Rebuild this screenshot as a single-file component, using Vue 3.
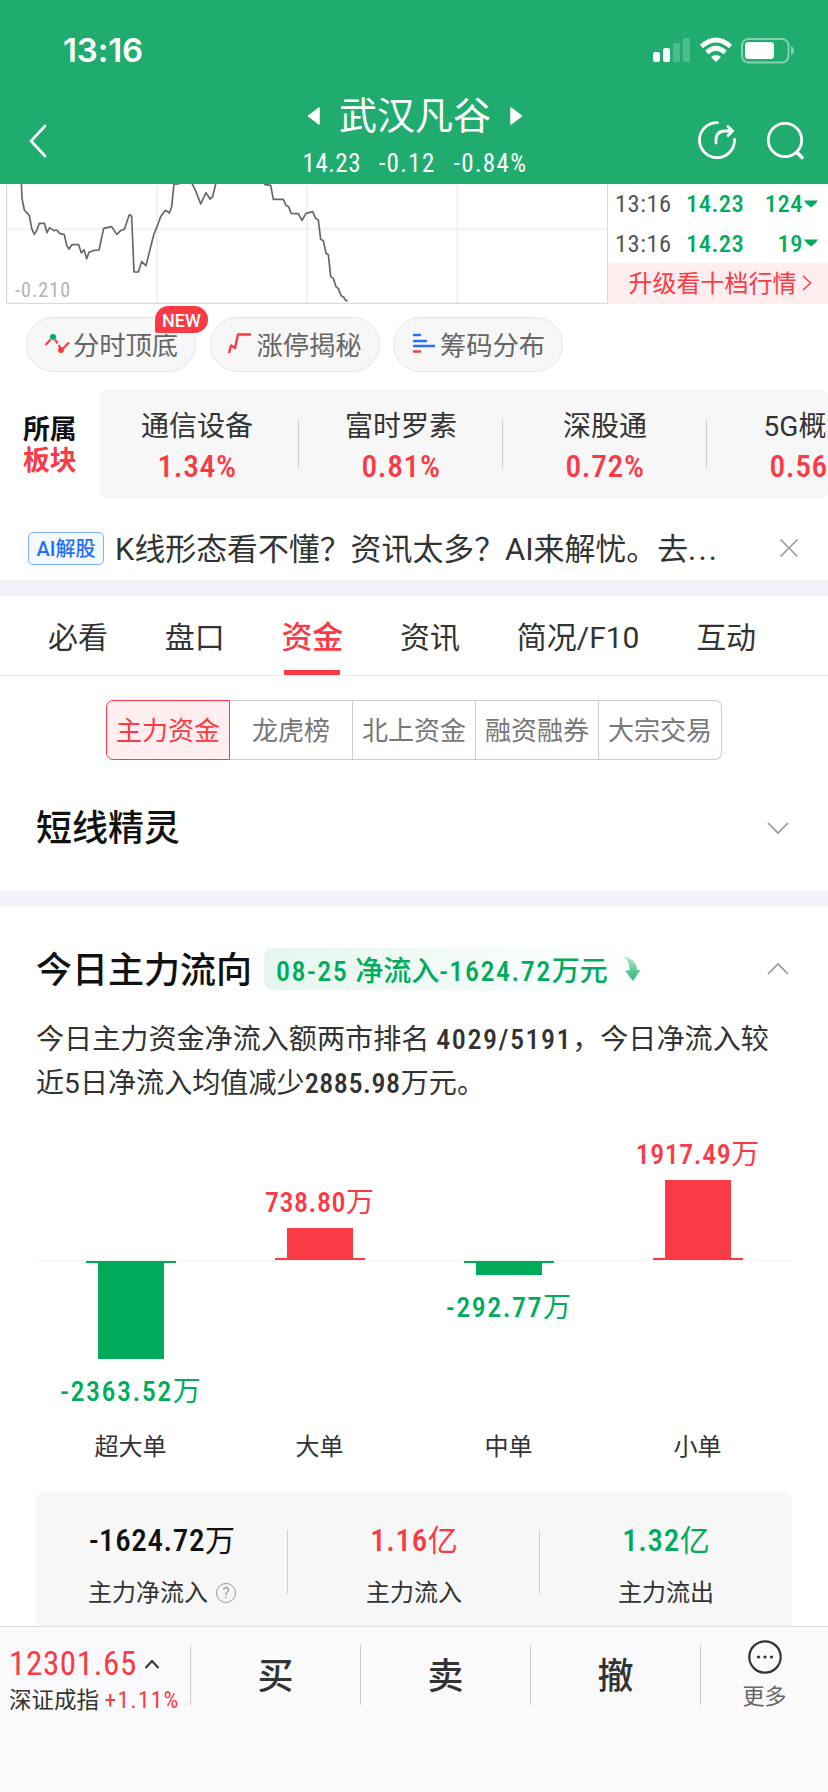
<template>
  <div class="page">
    <header class="header">
      <div class="status">
        <span class="clock">13:16</span>
        <svg class="status-icons" width="144" height="28" viewBox="0 0 144 28">
          <g fill="#fff">
            <rect x="1" y="16" width="7" height="10" rx="2" />
            <rect x="11" y="12" width="7" height="14" rx="2" />
            <rect x="21" y="7" width="7" height="19" rx="2" opacity=".2" />
            <rect x="31" y="2" width="7" height="24" rx="2" opacity=".2" />
            <path d="M64 26l-5-5q5-4 10 0z" />
            <rect x="93" y="6" width="29" height="17" rx="3.5" />
            <path d="M139 10q3 1.200 3 4.500t-3 4.500z" opacity=".45" />
          </g>
          <g fill="none" stroke="#fff" stroke-width="4.600">
            <path d="M49.500 10.500Q64-2.500 78.500 10.500" />
            <path d="M54.800 16.500Q64 8 73.200 16.500" />
          </g>
          <rect x="90" y="3" width="46.500" height="23.500" rx="6.500" fill="none" stroke="#fff" stroke-width="2" opacity=".45" />
        </svg>
      </div>
      <div class="nav">
        <svg class="back" width="20" height="36" viewBox="0 0 20 36">
          <path d="M17 3L3 18l14 15" fill="none" stroke="#fff" stroke-width="2.600" stroke-linecap="round" />
        </svg>
        <div class="stock">
          <div class="stock-name">
            <svg width="14" height="20" viewBox="0 0 14 20"><path d="M1.500 10L12 2v16z" fill="#fff" stroke="#fff" stroke-width="1.500" stroke-linejoin="round" /></svg>
            <span>武汉凡谷</span>
            <svg width="14" height="20" viewBox="0 0 14 20"><path d="M12.500 10L2 2v16z" fill="#fff" stroke="#fff" stroke-width="1.500" stroke-linejoin="round" /></svg>
          </div>
          <div class="stock-price">
            <span class="num">14.23</span><span class="num wide">-0.12</span><span class="num wide">-0.84%</span>
          </div>
        </div>
        <svg class="nav-icons" width="108" height="44" viewBox="0 0 108 44">
          <g fill="none" stroke="#fff" stroke-width="2.800" stroke-linecap="round">
            <path d="M20.500 4.600A17.500 17.500 0 1 0 37.500 21.500" />
            <path d="M19 25v-3q0-9 9-9h6" />
            <path d="M31 8.500l4.500 4.500-4.500 4.500" />
            <circle cx="88" cy="22" r="16.700" />
            <path d="M100 34.500l5 5" stroke-width="3.600" />
          </g>
        </svg>
      </div>
    </header>

    <section class="quote">
      <div class="minute">
        <svg width="608" height="120" viewBox="0 12 1824 360">
          <g stroke="#efefef" stroke-width="5">
            <path d="M20 147H1822M471 12V370M921 12V370M1372 12V370" />
          </g>
          <path d="M20 12V370H1823V12" fill="none" stroke="#d2d3d5" stroke-width="3" />
          <g fill="none" stroke="#666" stroke-width="5" stroke-linejoin="round">
            <path d="M64 8L66 55 73 90 80 98 88 106 95 145 103 163 110 152 118 130H133L141 158 149 143 162 152 170 150 180 161 193 164 200 196 207 207 216 194H236L244 219 252 209 260 236 267 217 283 211 297 210 311 145 335 140 350 163 362 152 373 148 388 104 395 108 402 276H415L425 245 438 257 461 165 471 140 482 110 495 92 502 94 508 99 515 80 522 12H538" />
            <path d="M575 8L588 35 602 72 618 38 630 57 638 50 648 8" />
            <path d="M792 13L812 16 820 58H850L858 76 866 80 873 100 895 101 906 121 918 100 938 95 947 115 955 120 962 178 970 182 978 220 985 224 992 290 1000 295 1008 320 1015 326 1023 347 1030 350 1038 362H1043" />
          </g>
        </svg>
        <span class="minute-low num wide">-0.210</span>
      </div>
      <div class="ticks">
        <div v-for="t in ticks" :key="t.vol" class="tick num">
          <span class="tick-time">{{ t.time }}</span>
          <span class="tick-price">{{ t.price }}</span>
          <span class="tick-vol">{{ t.vol }}</span>
          <svg width="16" height="10" viewBox="0 0 16 10"><path d="M1 1.500h14q-2 3.500-7 7-5-3.500-7-7z" fill="#00ac5c" /></svg>
        </div>
        <div class="upgrade">
          <span>升级看十档行情</span>
          <svg width="12" height="18" viewBox="0 0 12 18"><path d="M2 2l7.500 7L2 16" fill="none" stroke="#fa3a44" stroke-width="1.500" /></svg>
        </div>
      </div>
    </section>

    <section class="tools">
      <div class="tool">
        <svg width="26" height="26" viewBox="0 0 26 26">
          <path d="M1.500 14l5-5.500M11 8.500l2.500 4M14.500 14l2 3M19 17.500l6-6" fill="none" stroke="#fa3a44" stroke-width="2.200" />
          <circle cx="9" cy="6" r="3" fill="#00ac5c" />
          <circle cx="17" cy="19" r="3" fill="#fa3a44" />
        </svg>
        <span>分时顶底</span>
        <em class="badge">NEW</em>
      </div>
      <div class="tool">
        <svg width="26" height="26" viewBox="0 0 26 26">
          <path d="M2 22l2-7.500 4 2.500 3-13.500h13" fill="none" stroke="#fa3a44" stroke-width="2.400" stroke-linejoin="round" />
        </svg>
        <span>涨停揭秘</span>
      </div>
      <div class="tool">
        <svg width="26" height="26" viewBox="0 0 26 26" stroke-width="2.400" stroke-linecap="round">
          <path d="M3 4h6M3 10h12M3 15h20" stroke="#2b6fff" />
          <path d="M3 20.500h6" stroke="#fa3a44" />
        </svg>
        <span>筹码分布</span>
      </div>
    </section>

    <section class="sector">
      <div class="sector-label">
        <span>所属</span>
        <span class="red">板块</span>
      </div>
      <div class="sector-list">
        <div v-for="s in sectors" :key="s.name" class="sector-item">
          <span class="sector-name">{{ s.name }}</span>
          <span class="sector-rate num">{{ s.rate }}</span>
        </div>
      </div>
    </section>

    <section class="ai">
      <span class="ai-tag">AI解股</span>
      <span class="ai-text">K线形态看不懂？资讯太多？AI来解忧。去<span class="dots">...</span></span>
      <svg width="22" height="22" viewBox="0 0 22 22"><path d="M2.500 2.500l17 17M19.500 2.500l-17 17" stroke="#999" stroke-width="1.600" /></svg>
    </section>

    <nav class="tabs">
      <span v-for="t in tabs" :key="t" class="tab" :class="{ active: t === tab }" @click="tab = t">{{ t }}</span>
    </nav>

    <div class="segments">
      <span v-for="s in segments" :key="s" class="segment" :class="{ active: s === segment }" @click="segment = s">{{ s }}</span>
    </div>

    <section class="fold">
      <h2>短线精灵</h2>
      <svg width="24" height="14" viewBox="0 0 24 14"><path d="M2 2l10 10L22 2" fill="none" stroke="#999" stroke-width="1.700" /></svg>
    </section>

    <section class="flow">
      <div class="flow-head">
        <h2>今日主力流向</h2>
        <span class="flow-tag">
          <span><span class="num wide">08-25</span> 净流入<span class="num wide">-1624.72</span>万元</span>
          <svg width="20" height="28" viewBox="0 0 20 28">
            <defs>
              <linearGradient id="drop" x1="0" y1="0" x2="0" y2="1">
                <stop offset="0" stop-color="#c4ead7" />
                <stop offset=".6" stop-color="#5cc893" />
                <stop offset="1" stop-color="#35b979" />
              </linearGradient>
            </defs>
            <path d="M1 1Q15 4 15 15h3.500L11 26 3 15.500h4.500Q8 7 1 1z" fill="url(#drop)" />
          </svg>
        </span>
        <svg class="flow-fold" width="24" height="14" viewBox="0 0 24 14"><path d="M2 12L12 2l10 10" fill="none" stroke="#999" stroke-width="1.700" /></svg>
      </div>
      <p class="flow-desc">
        今日主力资金净流入额两市排名 <b class="num wide">4029/5191</b>，今日净流入较<br>近5日净流入均值减少<b class="num">2885.98</b>万元。
      </p>

      <div class="bars">
        <div v-for="b in bars" :key="b.name" class="bar-col" :class="b.up ? 'up' : 'down'">
          <div class="bar-top">
            <template v-if="b.up">
              <span class="bar-value"><span class="num">{{ b.value }}</span>万</span>
              <i class="bar" :style="{ height: b.size + 'px' }"></i>
              <i class="bar-base"></i>
            </template>
          </div>
          <div class="bar-bottom">
            <template v-if="!b.up">
              <i class="bar-base"></i>
              <i class="bar" :style="{ height: b.size + 'px' }"></i>
              <span class="bar-value"><span class="num wide">{{ b.value }}</span>万</span>
            </template>
          </div>
          <span class="bar-name">{{ b.name }}</span>
        </div>
      </div>

      <div class="stats">
        <div v-for="s in stats" :key="s.label" class="stat">
          <span class="stat-value" :class="s.tone"><span class="num">{{ s.value }}</span>{{ s.unit }}</span>
          <span class="stat-label">
            {{ s.label }}
            <i v-if="s.help" class="help">?</i>
          </span>
        </div>
      </div>
    </section>

    <footer class="footer">
      <div class="index">
        <div class="index-value">
          <span class="num">12301.65</span>
          <svg width="16" height="12" viewBox="0 0 16 12"><path d="M1.500 10L8 3l6.500 7" fill="none" stroke="#333" stroke-width="2" /></svg>
        </div>
        <div class="index-name">深证成指 <span class="index-rate num wide">+1.11%</span></div>
      </div>
      <span class="action">买</span>
      <span class="action">卖</span>
      <span class="action">撤</span>
      <div class="more">
        <svg width="36" height="36" viewBox="0 0 36 36">
          <circle cx="18" cy="18" r="15.700" fill="none" stroke="#333" stroke-width="2.200" />
          <g fill="#333"><circle cx="11.500" cy="18" r="1.600" /><circle cx="18" cy="18" r="1.600" /><circle cx="24.500" cy="18" r="1.600" /></g>
        </svg>
        <span>更多</span>
      </div>
    </footer>
  </div>
</template>

<script setup>
import { ref } from 'vue'

const tabs = ['必看', '盘口', '资金', '资讯', '简况/F10', '互动']
const tab = ref('资金')

const segments = ['主力资金', '龙虎榜', '北上资金', '融资融券', '大宗交易']
const segment = ref('主力资金')

const ticks = [
  { time: '13:16', price: '14.23', vol: 124 },
  { time: '13:16', price: '14.23', vol: 19 },
]

const sectors = [
  { name: '通信设备', rate: '1.34%' },
  { name: '富时罗素', rate: '0.81%' },
  { name: '深股通', rate: '0.72%' },
  { name: '5G概念', rate: '0.56%' },
]

const bars = [
  { name: '超大单', value: '-2363.52', up: false, size: 96 },
  { name: '大单', value: '738.80', up: true, size: 30 },
  { name: '中单', value: '-292.77', up: false, size: 12 },
  { name: '小单', value: '1917.49', up: true, size: 78 },
]

const stats = [
  { label: '主力净流入', value: '-1624.72', unit: '万', tone: '', help: true },
  { label: '主力流入', value: '1.16', unit: '亿', tone: 'red' },
  { label: '主力流出', value: '1.32', unit: '亿', tone: 'green' },
]
</script>

<style>
body {
  margin: 0;
  background: #fff;
}
</style>

<style scoped>
.page {
  width: 828px;
  height: 1792px;
  overflow: hidden;
  display: flex;
  flex-direction: column;
  background: #fff;
  color: #333;
  font-family: Roboto, "Noto Sans CJK SC", sans-serif;
}
.page > * {
  flex: none;
  box-sizing: border-box;
}
svg {
  display: block;
  flex: none;
}
i, em {
  font-style: normal;
}
.red { color: #fa3a44; }
.green { color: #00ac5c; }
.num {
  font-stretch: 85%;
  letter-spacing: 0.02em;
}
.num.wide {
  letter-spacing: 0.054em;
}

.header {
  height: 184px;
  background: #21ac6f;
  color: #fff;
}
.status {
  height: 90px;
  padding: 10px 32px 0 63px;
  box-sizing: border-box;
  display: flex;
  justify-content: space-between;
  align-items: center;
}
.clock {
  font: 600 33px/36px Inter, sans-serif;
  letter-spacing: -0.1px;
}
.status-icons {
  margin-top: -1px;
}
.nav {
  height: 94px;
  padding: 0 26px 0 28px;
  display: grid;
  grid-template-columns: 108px 1fr 108px;
}
.back {
  margin-top: 33px;
}
.stock {
  display: flex;
  flex-direction: column;
  align-items: center;
}
.stock-name {
  display: flex;
  align-items: center;
  gap: 18px;
  font-size: 38px;
  line-height: 52px;
}
.stock-price {
  display: flex;
  gap: 18px;
  font-size: 25px;
  line-height: 28px;
  margin-top: 8px;
}
.nav-icons {
  margin-top: 28px;
  margin-left: 3px;
}

.quote {
  height: 120px;
  display: flex;
}
.minute {
  position: relative;
  width: 608px;
}
.minute-low {
  position: absolute;
  left: 15px;
  bottom: 3px;
  font-size: 20px;
  line-height: 22px;
  color: #b3b3b3;
}
.ticks {
  flex: 1;
}
.tick {
  height: 39.500px;
  padding: 0 9px 0 7px;
  display: flex;
  align-items: center;
  font-size: 24.500px;
  font-weight: 500;
  color: #00ac5c;
}
.tick-time {
  width: 71px;
  font-weight: 400;
  color: #555;
}
.tick-vol {
  margin-left: auto;
}
.upgrade {
  height: 41px;
  box-sizing: border-box;
  display: flex;
  align-items: center;
  justify-content: center;
  gap: 4px;
  padding: 0 0 4px 5px;
  background: #feeeef;
  color: #fa3a44;
  font-size: 24px;
}
.upgrade svg {
  margin-top: 2px;
}

.tools {
  height: 86px;
  padding: 13px 0 0 26px;
  display: flex;
  gap: 13.500px;
}
.tool {
  position: relative;
  box-sizing: border-box;
  width: 170px;
  height: 55px;
  padding-bottom: 2px;
  display: flex;
  align-items: center;
  justify-content: center;
  gap: 3px;
  border: 1px solid #e6e6e6;
  border-radius: 28px;
  background: #f7f7f7;
  font-size: 26.300px;
  color: #666;
}
.badge {
  position: absolute;
  left: 128px;
  top: -12px;
  width: 53px;
  height: 27px;
  border-radius: 14px 14px 14px 2px;
  box-shadow: 0 0 0 1px #fff;
  background: #fa3a44;
  color: #fff;
  text-align: center;
  font-size: 18px;
  font-weight: 500;
  line-height: 29px;
}

.sector {
  height: 108px;
  display: flex;
}
.sector-label {
  width: 100px;
  padding: 25px 0 0 23px;
  box-sizing: border-box;
  display: flex;
  flex-direction: column;
  font-size: 26.800px;
  font-weight: 700;
  line-height: 31px;
  color: #111;
}
.sector-label .red {
  color: #fa3a44;
}
.sector-list {
  width: 728px;
  display: flex;
  overflow: hidden;
  border-radius: 8px;
  background: #f7f7f7;
}
.sector-item {
  flex: none;
  position: relative;
  width: 204px;
  padding-top: 18px;
  display: flex;
  flex-direction: column;
  align-items: center;
}
.sector-item:first-child {
  margin-left: -5px;
}
.sector-item:not(:last-child)::after {
  content: "";
  position: absolute;
  right: 0;
  top: 30px;
  width: 1px;
  height: 48px;
  background: #ccc;
}
.sector-name {
  font-size: 28px;
  line-height: 38px;
}
.sector-rate {
  font-size: 31.500px;
  font-weight: 500;
  line-height: 42px;
  color: #fa3a44;
}

.ai {
  height: 98px;
  padding: 18px 28px 0 28px;
  border-bottom: 16px solid #f3f4f9;
  display: flex;
  align-items: center;
}
.ai-tag {
  box-sizing: border-box;
  width: 76px;
  height: 33px;
  border: 1px solid #7eb0fb;
  border-radius: 5px;
  background: #f4f8ff;
  color: #1e6fff;
  text-align: center;
  font-size: 20px;
  font-weight: 500;
  line-height: 32px;
}
.ai-text {
  margin-left: 11px;
  margin-right: auto;
  padding-top: 4px;
  font-size: 30.900px;
  line-height: 36px;
}
.dots {
  letter-spacing: 2.200px;
}

.tabs {
  height: 80px;
  padding-left: 48px;
  border-bottom: 1px solid #ececec;
  display: flex;
  gap: 56.700px;
  font-size: 30px;
  line-height: 83px;
}
.tab.active {
  position: relative;
  font-size: 31px;
  font-weight: 500;
  color: #fa3a44;
}
.tab.active::after {
  content: "";
  position: absolute;
  left: 3px;
  right: 3px;
  bottom: 0;
  height: 5px;
  background: #fa3a44;
}

.segments {
  width: 616px;
  height: 60px;
  margin: 24px 0 0 106px;
  display: flex;
  font-size: 26px;
  color: #777;
}
.segment {
  flex: 1;
  box-sizing: border-box;
  border: 1px solid #ccc;
  border-left: 0;
  line-height: 60px;
  text-align: center;
}
.segment:first-child {
  border-left: 1px solid #ccc;
  border-radius: 7px 0 0 7px;
}
.segment:last-child {
  border-radius: 0 7px 7px 0;
}
.segment.active {
  border-color: #fa3a44;
  background: #feeeef;
  color: #fa3a44;
}

h2 {
  margin: 0;
  font-size: 36px;
  font-weight: 500;
  line-height: 44px;
  color: #111;
}
.fold {
  height: 146px;
  padding: 6px 38px 0 36px;
  border-bottom: 16px solid #f3f4f9;
  display: flex;
  align-items: center;
  justify-content: space-between;
}
.fold h2 {
  padding-top: 2px;
}

.flow {
  height: 720px;
  padding: 42px 36px 0;
}
.flow-head {
  height: 42px;
  display: flex;
  align-items: center;
}
.flow-head h2 {
  padding-top: 3px;
}
.flow-tag {
  height: 42px;
  margin-left: 12px;
  padding-left: 12px;
  display: flex;
  align-items: center;
  gap: 14px;
  border-radius: 8px;
  background: linear-gradient(90deg, #e5f6ee, #fff);
  color: #00ac5c;
  font-size: 28px;
  font-weight: 500;
}
.flow-fold {
  margin-left: auto;
  margin-right: 2px;
}
.flow-desc {
  margin: 28px 0 0;
  height: 87px;
  font-size: 28.100px;
  line-height: 44px;
  white-space: nowrap;
}
.flow-desc b {
  font-weight: 500;
}

.bars {
  height: 387px;
  display: grid;
  grid-template-columns: repeat(4, 1fr);
}
.bar-col {
  display: flex;
  flex-direction: column;
  align-items: center;
}
.bar-top,
.bar-bottom {
  width: 100%;
  display: flex;
  flex-direction: column;
  align-items: center;
}
.bar-top {
  height: 156px;
  justify-content: flex-end;
  box-sizing: border-box;
  border-bottom: 1px solid #f2f2f2;
}
.bar-bottom {
  height: 166px;
}
.bar {
  width: 66px;
}
.bar-base {
  width: 90px;
  height: 2px;
}
.bar-value {
  font-size: 28px;
  line-height: 32px;
}
.bar-value .num { font-weight: 500; }
.bar-top .bar-value { margin-bottom: 9px; }
.bar-bottom .bar-value { margin-top: 17px; }
.up { color: #fa3a44; }
.down { color: #00ac5c; }
.up .bar, .up .bar-base { background: #fa3a44; }
.down .bar, .down .bar-base { background: #00ac5c; }
.bar-name {
  font-size: 24px;
  line-height: 40px;
  color: #333;
}

.stats {
  height: 150px;
  display: grid;
  grid-template-columns: repeat(3, 1fr);
  border-radius: 8px;
  background: #f7f7f7;
}
.stat {
  position: relative;
  padding-top: 29px;
  display: flex;
  flex-direction: column;
  align-items: center;
  color: #333;
}
.stat:not(:last-child)::after {
  content: "";
  position: absolute;
  right: 0;
  top: 38px;
  width: 1px;
  height: 64px;
  background: #ccc;
}
.stat-value {
  font-size: 30px;
  line-height: 40px;
}
.stat-value .num {
  font-size: 31px;
  font-weight: 500;
}
.stat-value:not(.red):not(.green) {
  color: #111;
}
.stat-label {
  margin-top: 14px;
  display: flex;
  align-items: center;
  gap: 8px;
  font-size: 24px;
  line-height: 36px;
}
.help {
  width: 18px;
  height: 18px;
  border: 1px solid #999;
  border-radius: 50%;
  text-align: center;
  font-size: 15px;
  line-height: 19px;
  color: #999;
}

.footer {
  height: 166px;
  border-top: 1px solid #d9dade;
  background: #fafafc;
  display: flex;
  position: relative;
}
.index {
  width: 190px;
  padding: 18px 0 0 9px;
  box-sizing: border-box;
}
.index-value {
  display: flex;
  align-items: center;
  gap: 7px;
  font-size: 33px;
  line-height: 38px;
  color: #fa3a44;
}
.index-name {
  margin-top: -1px;
  font-size: 22.500px;
  line-height: 36px;
  white-space: nowrap;
}
.index-rate {
  font-size: 23.500px;
  color: #fa3a44;
}
.action,
.more {
  height: 60px;
  margin-top: 18px;
  border-left: 1px solid #ccc;
  box-sizing: border-box;
}
.action {
  width: 170px;
  text-align: center;
  font-size: 36px;
  font-weight: 500;
  line-height: 64px;
}
.more {
  flex: 1;
  display: flex;
  flex-direction: column;
  align-items: center;
  font-size: 22px;
  line-height: 34px;
  color: #666;
}
.more svg {
  margin: -6px 0 5px;
}
</style>
